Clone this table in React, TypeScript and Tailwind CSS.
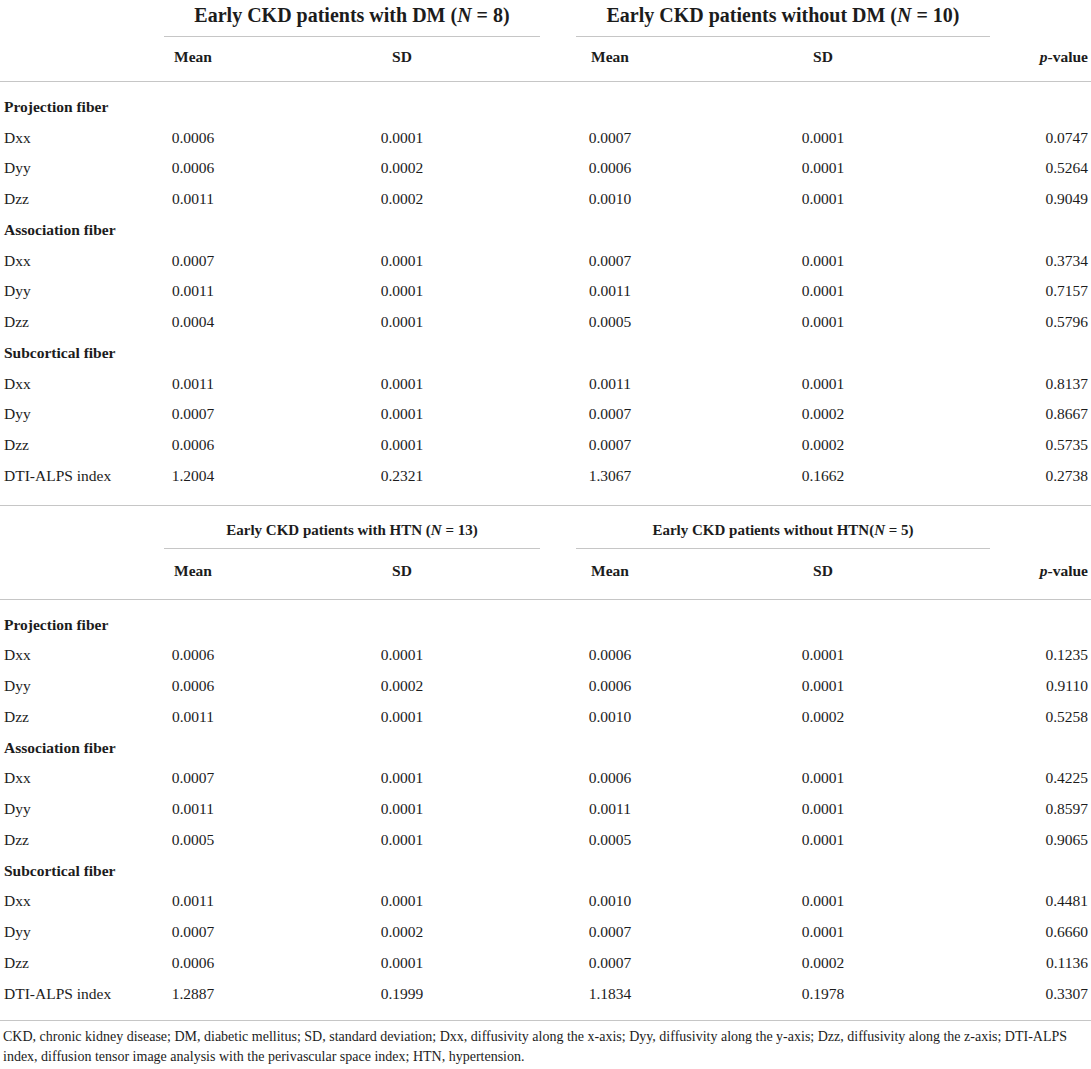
type Row = string[] | { h: string };

const sec1: Row[] = [
  { h: 'Projection fiber' },
  ['Dxx', '0.0006', '0.0001', '0.0007', '0.0001', '0.0747'],
  ['Dyy', '0.0006', '0.0002', '0.0006', '0.0001', '0.5264'],
  ['Dzz', '0.0011', '0.0002', '0.0010', '0.0001', '0.9049'],
  { h: 'Association fiber' },
  ['Dxx', '0.0007', '0.0001', '0.0007', '0.0001', '0.3734'],
  ['Dyy', '0.0011', '0.0001', '0.0011', '0.0001', '0.7157'],
  ['Dzz', '0.0004', '0.0001', '0.0005', '0.0001', '0.5796'],
  { h: 'Subcortical fiber' },
  ['Dxx', '0.0011', '0.0001', '0.0011', '0.0001', '0.8137'],
  ['Dyy', '0.0007', '0.0001', '0.0007', '0.0002', '0.8667'],
  ['Dzz', '0.0006', '0.0001', '0.0007', '0.0002', '0.5735'],
  ['DTI-ALPS index', '1.2004', '0.2321', '1.3067', '0.1662', '0.2738'],
];

const sec2: Row[] = [
  { h: 'Projection fiber' },
  ['Dxx', '0.0006', '0.0001', '0.0006', '0.0001', '0.1235'],
  ['Dyy', '0.0006', '0.0002', '0.0006', '0.0001', '0.9110'],
  ['Dzz', '0.0011', '0.0001', '0.0010', '0.0002', '0.5258'],
  { h: 'Association fiber' },
  ['Dxx', '0.0007', '0.0001', '0.0006', '0.0001', '0.4225'],
  ['Dyy', '0.0011', '0.0001', '0.0011', '0.0001', '0.8597'],
  ['Dzz', '0.0005', '0.0001', '0.0005', '0.0001', '0.9065'],
  { h: 'Subcortical fiber' },
  ['Dxx', '0.0011', '0.0001', '0.0010', '0.0001', '0.4481'],
  ['Dyy', '0.0007', '0.0002', '0.0007', '0.0001', '0.6660'],
  ['Dzz', '0.0006', '0.0001', '0.0007', '0.0002', '0.1136'],
  ['DTI-ALPS index', '1.2887', '0.1999', '1.1834', '0.1978', '0.3307'],
];

const cols = 'grid grid-cols-[164px_58px_360px_56px_370px_1fr]';

const ColHeads = ({ className }: { className: string }) => (
  <div className={`${cols} items-center border-b border-[#c6c6c6] text-[15.5px] font-bold ${className}`}>
    <div />
    <div className="text-center">Mean</div>
    <div className="text-center">SD</div>
    <div className="text-center">Mean</div>
    <div className="text-center">SD</div>
    <div className="pr-[3px] text-right">
      <i>p</i>-value
    </div>
  </div>
);

const Body = ({ rows, className }: { rows: Row[]; className: string }) => (
  <div className={`border-b border-[#c6c6c6] pt-[9px] ${className}`}>
    {rows.map((r, i) =>
      Array.isArray(r) ? (
        <div key={i} className={`${cols} h-[30.75px] items-center text-[15.5px]`}>
          <div className="pl-1">{r[0]}</div>
          <div className="text-center">{r[1]}</div>
          <div className="text-center">{r[2]}</div>
          <div className="text-center">{r[3]}</div>
          <div className="text-center">{r[4]}</div>
          <div className="pr-[3px] text-right">{r[5]}</div>
        </div>
      ) : (
        <div key={i} className="flex h-[30.75px] items-center pl-1 text-[15.5px] font-bold">
          {r.h}
        </div>
      ),
    )}
  </div>
);

export default function App() {
  return (
    <div className="h-[1069px] w-[1091px] bg-white text-[#1c1c1c] font-['Liberation_Serif',serif]">
      {/* 1: DM */}
      <div className="grid h-[33px] grid-cols-[164px_376px_36px_414px_1fr] text-[20px] font-bold">
        <div />
        <div className="flex items-center justify-center border-b border-[#c6c6c6] pb-[6px]">
          Early CKD patients with DM (<i>N</i>&nbsp;=&nbsp;8)
        </div>
        <div />
        <div className="flex items-center justify-center border-b border-[#c6c6c6] pb-[6px]">
          Early CKD patients without DM (<i>N</i>&nbsp;=&nbsp;10)
        </div>
        <div />
      </div>
      <ColHeads className="h-[49px] pb-[1px]" />
      <Body rows={sec1} className="pb-[14px]" />

      {/* 2: HTN */}
      <div className="grid h-[43px] grid-cols-[164px_376px_36px_414px_1fr] text-[15px] font-bold">
        <div />
        <div className="flex items-center justify-center border-b border-[#c6c6c6] pt-[6px]">
          Early CKD patients with HTN (<i>N</i>&nbsp;=&nbsp;13)
        </div>
        <div />
        <div className="flex items-center justify-center border-b border-[#c6c6c6] pt-[6px]">
          Early CKD patients without HTN(<i>N</i>&nbsp;=&nbsp;5)
        </div>
        <div />
      </div>
      <ColHeads className="h-[51px] pb-[7px]" />
      <Body rows={sec2} className="pb-[11px]" />

      <p className="pt-[6px] pl-[3px] text-[14px] leading-[20px]">
        CKD, chronic kidney disease; DM, diabetic mellitus; SD, standard deviation; Dxx, diffusivity along the
        x-axis; Dyy, diffusivity along the y-axis; Dzz, diffusivity along the z-axis; DTI-ALPS index, diffusion
        tensor image analysis with the perivascular space index; HTN, hypertension.
      </p>
    </div>
  );
}
